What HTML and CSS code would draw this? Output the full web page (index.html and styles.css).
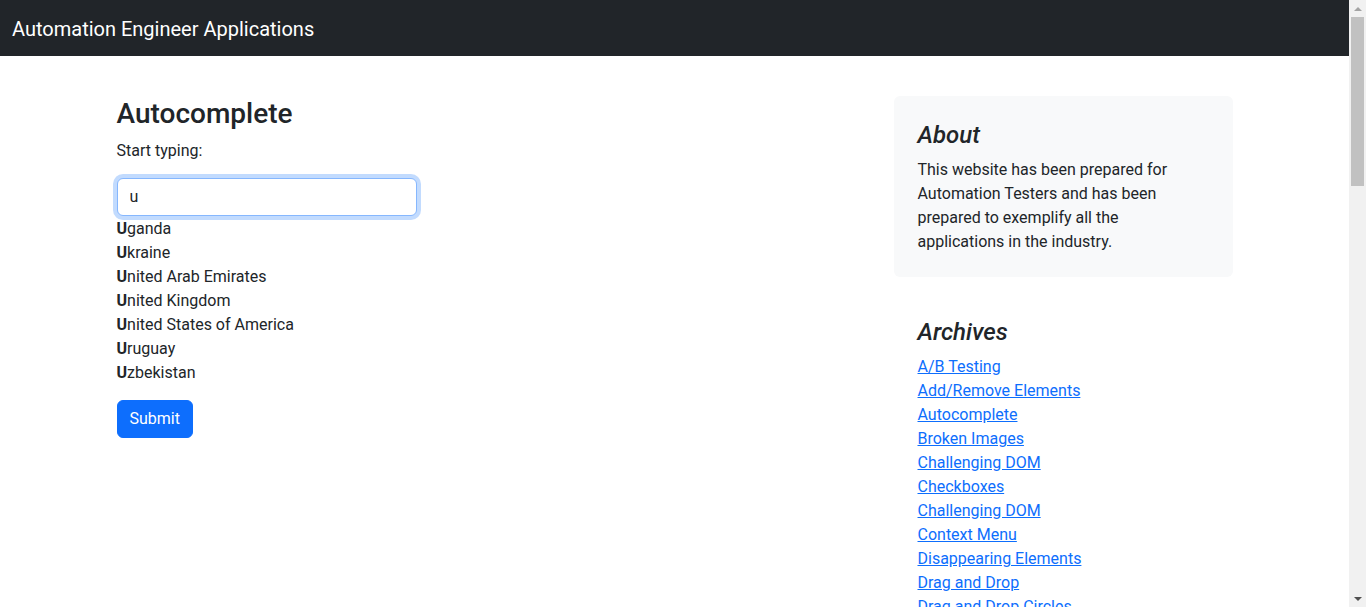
FILE: index.html
```html
<!DOCTYPE html>
<html lang="en">
<head>
<meta charset="utf-8">
<title>Autocomplete</title>
<link rel="stylesheet" href="styles.css">
</head>
<body>
<header class="navbar">
  <a class="brand" href="#">Automation Engineer Applications</a>
</header>
<div class="container">
  <div class="row">
    <main class="main">
      <h3 class="title">Autocomplete</h3>
      <p class="hint">Start typing:</p>
      <form class="form" autocomplete="off">
        <div class="autocomplete">
          <input class="input is-focused" type="text" value="u" name="country">
          <div class="suggestions">
            <div class="item"><strong>U</strong>ganda</div>
            <div class="item"><strong>U</strong>kraine</div>
            <div class="item"><strong>U</strong>nited Arab Emirates</div>
            <div class="item"><strong>U</strong>nited Kingdom</div>
            <div class="item"><strong>U</strong>nited States of America</div>
            <div class="item"><strong>U</strong>ruguay</div>
            <div class="item"><strong>U</strong>zbekistan</div>
          </div>
        </div>
        <button class="btn" type="button">Submit</button>
      </form>
    </main>
    <aside class="sidebar">
      <div class="about">
        <h4 class="side-title">About</h4>
        <p class="about-text">This website has been prepared for Automation Testers and has been prepared to exemplify all the applications in the industry.</p>
      </div>
      <div class="archives">
        <h4 class="side-title">Archives</h4>
        <ol class="links">
          <li><a href="#">A/B Testing</a></li>
          <li><a href="#">Add/Remove Elements</a></li>
          <li><a href="#">Autocomplete</a></li>
          <li><a href="#">Broken Images</a></li>
          <li><a href="#">Challenging DOM</a></li>
          <li><a href="#">Checkboxes</a></li>
          <li><a href="#">Challenging DOM</a></li>
          <li><a href="#">Context Menu</a></li>
          <li><a href="#">Disappearing Elements</a></li>
          <li><a href="#">Drag and Drop</a></li>
          <li><a href="#">Drag and Drop Circles</a></li>
        </ol>
      </div>
    </aside>
  </div>
</div>
<div class="scrollbar" aria-hidden="true">
  <div class="sb-btn"><span class="sb-arrow up"></span></div>
  <div class="sb-track"><div class="sb-thumb"></div></div>
  <div class="sb-btn"><span class="sb-arrow down"></span></div>
</div>
</body>
</html>
```
FILE: styles.css
```css
* { box-sizing: border-box; }

html, body { height: 100%; }

body {
  margin: 0;
  padding-right: 17px;
  overflow: hidden;
  font-family: Roboto, "Liberation Sans", Arial, sans-serif;
  font-size: 16px;
  line-height: 1.5;
  color: #212529;
  background: #fff;
}

.navbar {
  height: 56px;
  background: #212529;
  display: flex;
  align-items: center;
  padding: 2px 12px 0;
}

.brand {
  color: #fff;
  font-size: 20px;
  text-decoration: none;
  line-height: 30px;
}

.container {
  max-width: 1140px;
  margin: 0 auto;
  padding: 40px 12px 0;
}

.row {
  display: flex;
  align-items: flex-start;
}

.main { flex: 1; }

.title {
  margin: 0 0 8px;
  padding-top: 1px;
  font-size: 28px;
  font-weight: 500;
  line-height: 1.2;
}

.hint { margin: 0 0 15px; }

.input {
  display: block;
  width: 300px;
  height: 38px;
  padding: 6px 12px;
  font: inherit;
  color: #212529;
  background: #fff;
  border: 1px solid #dee2e6;
  border-radius: 6px;
  outline: none;
}

.input.is-focused {
  border-color: #86b7fe;
  box-shadow: 0 0 0 4px rgba(13, 110, 253, 0.25);
}

.suggestions {
  padding-top: 1px;
  margin-bottom: 15px;
}

.item strong { font-weight: 700; }

.btn {
  display: inline-block;
  font: inherit;
  line-height: 24px;
  padding: 6px 12px;
  color: #fff;
  background: #0d6efd;
  border: 1px solid #0d6efd;
  border-radius: 6px;
  cursor: pointer;
}

.sidebar {
  width: 339px;
  flex: 0 0 339px;
}

.about {
  background: #f8f9fa;
  border-radius: 6px;
  padding: 25px 24px 23px;
  margin-bottom: 16px;
}

.archives { padding: 25px 24px 24px; }

.side-title {
  margin: 0 0 8px;
  font-size: 24px;
  font-weight: 500;
  font-style: italic;
  line-height: 1.2;
}

.about-text { margin: 0; }

.links {
  list-style: none;
  margin: 0;
  padding: 0;
}

.links a { color: #0d6efd; text-decoration: underline; }

/* browser scrollbar drawn over the right edge */
.scrollbar {
  position: fixed;
  top: 0;
  right: 0;
  width: 17px;
  height: 100%;
  background: #f1f1f1;
  display: flex;
  flex-direction: column;
}

.sb-btn {
  height: 17px;
  flex: 0 0 17px;
  display: flex;
  align-items: center;
  justify-content: center;
}

.sb-arrow {
  width: 0;
  height: 0;
  border-left: 4px solid transparent;
  border-right: 4px solid transparent;
}

.sb-arrow.up { border-bottom: 4px solid #a3a3a3; }
.sb-arrow.down { border-top: 4px solid #505050; }

.sb-track {
  flex: 1;
  padding: 0 2px;
}

.sb-thumb {
  height: 169px;
  background: #c1c1c1;
}
```
